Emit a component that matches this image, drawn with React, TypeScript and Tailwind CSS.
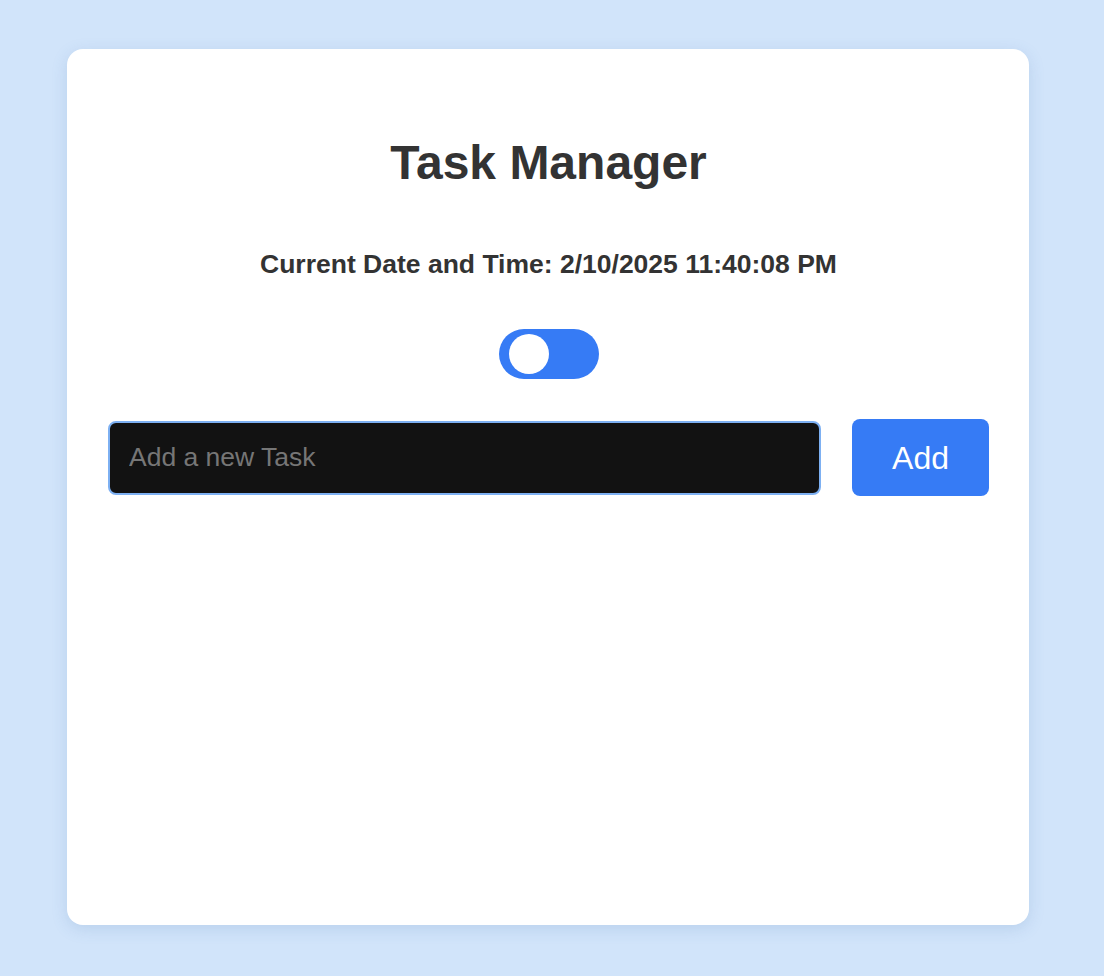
import { useState } from 'react';

export default function App() {
  const [on, setOn] = useState(false);

  return (
    <div className="min-h-[976px] w-full bg-[#d1e4fa] pt-[49px] pb-[51px] font-['Liberation_Sans',Arial,sans-serif]">
      <div className="ml-[67px] w-[962px] h-[876px] bg-white rounded-2xl shadow-[0_4px_16px_rgba(80,120,180,0.18)] pl-[41px] pr-10 pt-[81px]">
        <h1 className="text-center text-[48px] leading-[66px] font-bold text-[#333333]">Task Manager</h1>
        <p className="mt-[53px] text-center text-[26.5px] leading-[30px] font-bold text-[#333333]">
          Current Date and Time: 2/10/2025 11:40:08 PM
        </p>
        <div className="mt-[50px] flex justify-center">
          <button
            onClick={() => setOn(!on)}
            className="w-[100px] h-[50px] rounded-full bg-[#367bf5] flex items-center px-[10px]"
          >
            <span className={on ? 'ml-auto w-[40px] h-[40px] rounded-full bg-white' : 'w-[40px] h-[40px] rounded-full bg-white'} />
          </button>
        </div>
        <div className="mt-[40px] flex items-center gap-[31px]">
          <input
            placeholder="Add a new Task"
            className="flex-1 h-[74px] rounded-lg bg-[#121212] border-2 border-[#7db0f2] px-[19px] text-[26.5px] text-white placeholder:text-[#767676] outline-none"
          />
          <button className="w-[137px] h-[77px] rounded-lg bg-[#367bf5] text-white text-[32px]">Add</button>
        </div>
      </div>
    </div>
  );
}
